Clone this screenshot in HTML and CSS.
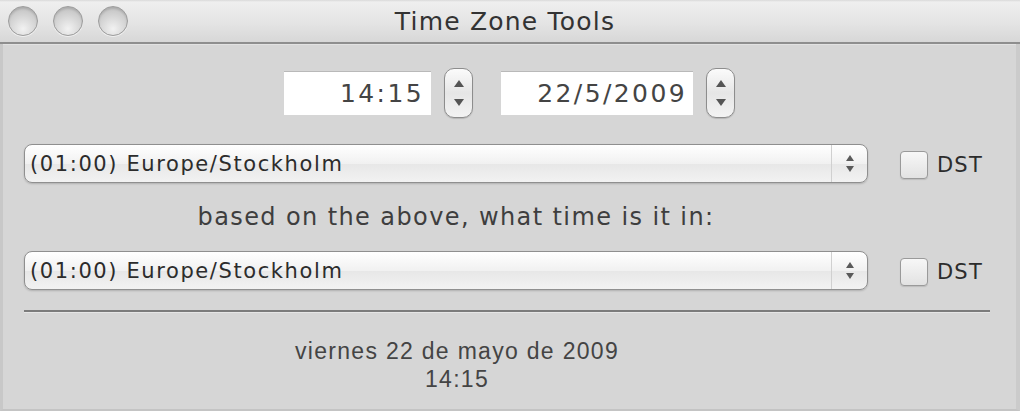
FILE: index.html
```html
<!DOCTYPE html>
<html>
<head>
<meta charset="utf-8">
<title>Time Zone Tools</title>
<link rel="stylesheet" href="styles.css">
</head>
<body>
<div class="window">
  <div class="titlebar">
    <div class="lights">
      <span class="light"></span>
      <span class="light"></span>
      <span class="light"></span>
    </div>
    <div class="title">Time Zone Tools</div>
    <div class="spacer"></div>
  </div>
  <div class="content">
    <div class="datetime">
      <div class="field time">14:15</div>
      <div class="stepper"><span class="up"></span><span class="down"></span></div>
      <div class="field date">22/5/2009</div>
      <div class="stepper"><span class="up"></span><span class="down"></span></div>
    </div>
    <div class="zone-row first">
      <div class="select">
        <span class="select-text">(01:00) Europe/Stockholm</span>
        <span class="select-arrows"><span class="up"></span><span class="down"></span></span>
      </div>
      <label class="check"><span class="box"></span><span class="check-label">DST</span></label>
    </div>
    <div class="prompt">based on the above, what time is it in:</div>
    <div class="zone-row">
      <div class="select">
        <span class="select-text">(01:00) Europe/Stockholm</span>
        <span class="select-arrows"><span class="up"></span><span class="down"></span></span>
      </div>
      <label class="check"><span class="box"></span><span class="check-label">DST</span></label>
    </div>
    <div class="separator"></div>
    <div class="result">
      <div>viernes 22 de mayo de 2009</div>
      <div>14:15</div>
    </div>
  </div>
</div>
</body>
</html>
```
FILE: styles.css
```css
* { box-sizing: border-box; }
html, body { margin: 0; padding: 0; }
body {
  width: 1020px;
  height: 411px;
  overflow: hidden;
  background: #d5d5d5;
  font-family: "DejaVu Sans", sans-serif;
  color: #3a3a3a;
}
.window {
  width: 1020px;
  height: 411px;
  background: #d6d6d6;
  border-left: 3px solid #c8c8c8;
  border-right: 4px solid #cbcbcb;
  border-bottom: 2px solid #c4c4c4;
}
.titlebar {
  height: 44px;
  display: grid;
  grid-template-columns: 1fr auto 1fr;
  align-items: center;
  background: linear-gradient(#d9d9d9 0px, #efefef 2px, #e5e5e5 22px, #d7d7d7 42px);
  border-bottom: 2px solid #8e8e8e;
  margin-left: -3px;
  margin-right: -4px;
}
.lights { display: flex; gap: 15px; align-items: center; padding-left: 8px; }
.light {
  width: 30px;
  height: 30px;
  border-radius: 50%;
  border: 1px solid #9c9c9c;
  background: radial-gradient(circle at 50% 78%, #f2f2f2 0%, #d8d8d8 45%, #b9b9b9 100%);
  box-shadow: inset 0 2px 2px rgba(0,0,0,0.12), 0 1px 0 rgba(255,255,255,0.6);
}
.title {
  font-size: 25px;
  letter-spacing: 1.2px;
  color: #333;
  padding-top: 1px;
  margin-right: 10px;
}
.content {
  padding: 23px 0 0 21px;
  border-top: 1px solid #e2e2e2;
}
.datetime {
  display: flex;
  justify-content: center;
  align-items: center;
  gap: 13px;
  margin-left: -21px;
  height: 50px;
}
.field {
  height: 44px;
  background: #fff;
  border-top: 1px solid #b9b9b9;
  font-size: 25px;
  letter-spacing: 2.4px;
  color: #444;
  text-align: right;
  line-height: 43px;
  padding-right: 6px;
}
.field.time { width: 147px; padding-right: 7px; }
.field.date { width: 192px; margin-left: 15px; }
.stepper {
  width: 29px;
  height: 50px;
  border: 1px solid #8d8d8d;
  border-radius: 10px;
  background: linear-gradient(#fbfbfb, #e6e6e6 50%, #f3f3f3);
  box-shadow: 0 1px 1px rgba(0,0,0,0.15);
  display: flex;
  flex-direction: column;
  align-items: center;
  justify-content: space-between;
  padding: 11px 0 11px;
}
.up, .down { width: 0; height: 0; display: block; }
.stepper .up {
  border-left: 5px solid transparent;
  border-right: 5px solid transparent;
  border-bottom: 7px solid #555;
}
.stepper .down {
  border-left: 5px solid transparent;
  border-right: 5px solid transparent;
  border-top: 7px solid #555;
}
.zone-row {
  display: flex;
  align-items: center;
  height: 39px;
}
.zone-row.first { margin-top: 26px; }
.select {
  width: 844px;
  height: 39px;
  border: 1px solid #8f8f8f;
  border-radius: 8px;
  background: linear-gradient(#ffffff, #f1f1f1 50%, #e7e7e7 51%, #f2f2f2);
  box-shadow: 0 1px 2px rgba(0,0,0,0.18);
  display: flex;
  align-items: center;
}
.select-text {
  flex: 1;
  font-size: 21px;
  letter-spacing: 1.6px;
  color: #2c2c2c;
  padding-left: 5px;
  padding-top: 1px;
}
.select-arrows {
  width: 36px;
  height: 100%;
  border-left: 1px solid #d0d0d0;
  display: flex;
  flex-direction: column;
  align-items: center;
  justify-content: center;
  gap: 5px;
}
.select-arrows .up {
  border-left: 4px solid transparent;
  border-right: 4px solid transparent;
  border-bottom: 6px solid #5a5a5a;
}
.select-arrows .down {
  border-left: 4px solid transparent;
  border-right: 4px solid transparent;
  border-top: 6px solid #5a5a5a;
}
.check {
  display: flex;
  align-items: center;
  margin-left: 32px;
  margin-top: 3px;
}
.box {
  width: 28px;
  height: 28px;
  border: 1px solid #9a9a9a;
  border-radius: 4px;
  background: linear-gradient(#f7f7f7, #e2e2e2);
  box-shadow: 0 1px 1px rgba(0,0,0,0.12);
}
.check-label {
  margin-left: 9px;
  font-size: 21px;
  letter-spacing: 1.2px;
  color: #2c2c2c;
}
.prompt {
  width: 864px;
  height: 68px;
  line-height: 68px;
  text-align: center;
  font-size: 24px;
  letter-spacing: 1.4px;
  color: #3e3e3e;
}
.separator {
  width: 966px;
  height: 3px;
  margin-top: 20px;
  border-top: 2px solid #7c7c7c;
  border-bottom: 1px solid #e6e6e6;
}
.result {
  width: 866px;
  margin-top: 24px;
  text-align: center;
  font-family: "Liberation Sans", Arial, sans-serif;
  font-size: 23px;
  letter-spacing: 1.3px;
  line-height: 28px;
  color: #444;
}
```
